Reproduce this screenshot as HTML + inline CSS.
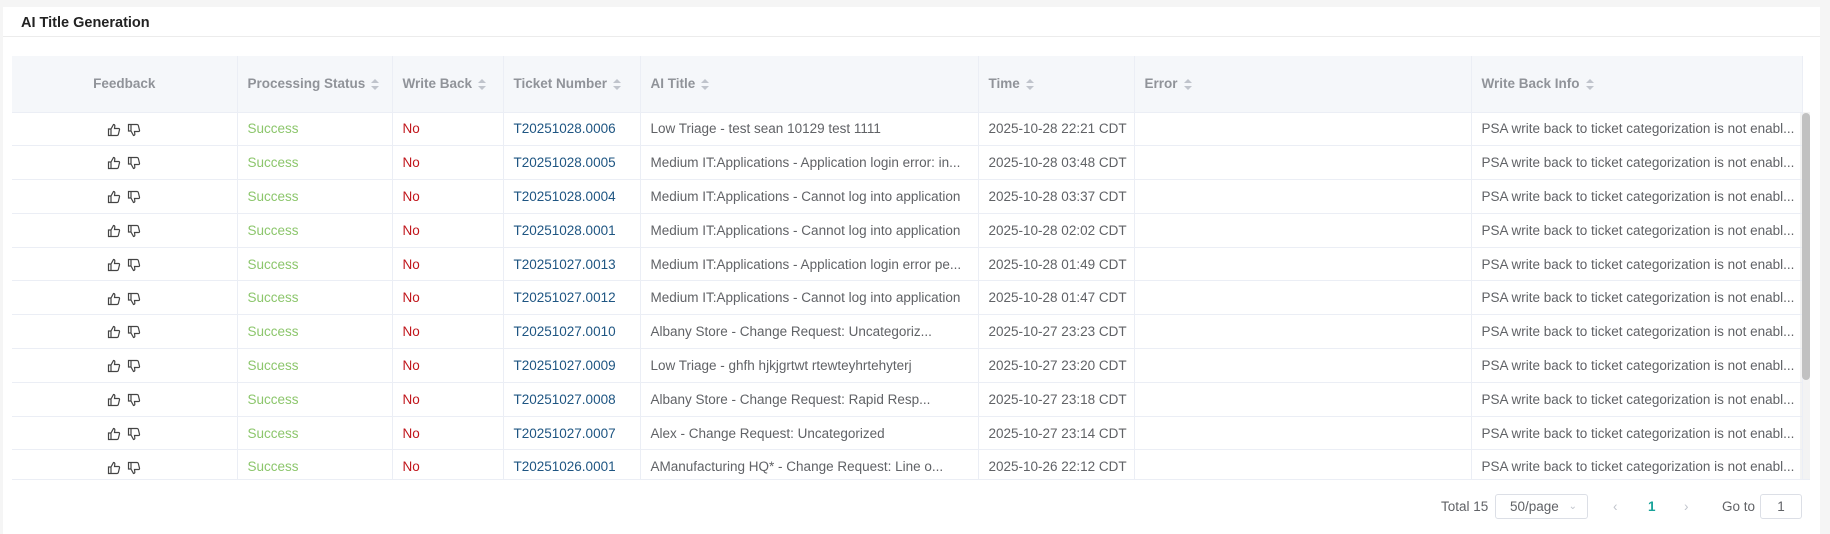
<!DOCTYPE html>
<html><head><meta charset="utf-8"><style>
*{box-sizing:border-box;margin:0;padding:0}
body{width:1830px;height:534px;background:#f5f5f5;font-family:"Liberation Sans",Arial,sans-serif;overflow:hidden;position:relative}
.card{position:absolute;left:3px;top:7px;width:1817px;height:527px;background:#fff}
.title{position:absolute;left:21px;top:15px;font-size:14.5px;font-weight:bold;color:#222}
.hl{position:absolute;left:3px;top:36px;width:1817px;height:1px;background:#ececec}
.tbl{position:absolute;left:12px;top:56px;width:1798px;height:424px;overflow:hidden;border-bottom:1px solid #ebeef5}
table{border-collapse:collapse;table-layout:fixed;width:1790px;font-size:13.5px}
th{height:56px;background:#f5f7fa;color:#909399;font-weight:bold;text-align:left;padding-left:10px;border-right:1px solid #ebeef5;border-bottom:1px solid #ebeef5;white-space:nowrap}
td{height:33.8px;padding-left:10px;border-right:1px solid #ebeef5;border-bottom:1px solid #ebeef5;white-space:nowrap;overflow:hidden;color:#606266}
th:first-child,td:first-child{text-align:center;padding-left:0}
.s{display:inline-block;vertical-align:middle;margin-left:6px;width:8px;height:12px;position:relative}
.s:before{content:"";position:absolute;left:0;top:0;border:4px solid transparent;border-bottom-color:#c0c4cc;border-top:0}
.s:after{content:"";position:absolute;left:0;top:7px;border:4px solid transparent;border-top-color:#c0c4cc;border-bottom:0}
.g{color:#8cc66c}.r{color:#c0151b}.b{color:#1e5582}
.sb{position:absolute;left:1802px;top:113px;width:8px;height:267px;background:#c1c1c1;border-radius:4px}
.sbt{position:absolute;left:1800px;top:112px;width:10px;height:368px;background:#f3f3f3}
.pg{position:absolute;top:494px;font-size:13.5px;color:#606266;line-height:25px}
.box{position:absolute;top:494px;height:25px;border:1px solid #dcdfe6;border-radius:3px;font-size:13.5px;color:#606266;line-height:23px}
</style></head><body>
<div class="card"></div>
<div class="title">AI Title Generation</div>
<div class="hl"></div>
<div class="sbt"></div>
<div class="tbl"><table>
<colgroup><col style="width:225px"><col style="width:155px"><col style="width:111px"><col style="width:137px"><col style="width:338px"><col style="width:156px"><col style="width:337px"><col style="width:331px"></colgroup>
<tr><th>Feedback</th><th>Processing Status<span class="s"></span></th><th>Write Back<span class="s"></span></th><th>Ticket Number<span class="s"></span></th><th>AI Title<span class="s"></span></th><th>Time<span class="s"></span></th><th>Error<span class="s"></span></th><th>Write Back Info<span class="s"></span></th></tr>
</table></div>
<div class="sb"></div>
<div class="pg" style="left:1441px">Total 15</div>
<div class="box" style="left:1495px;width:93px;padding-left:14px">50/page<span style="position:absolute;right:10px;top:0;color:#c0c4cc;font-size:10px">&#8964;</span></div>
<div class="pg" style="left:1613px;color:#c0c4cc">&#8249;</div>
<div class="pg" style="left:1648px;color:#1aa39a;font-weight:bold">1</div>
<div class="pg" style="left:1684px;color:#c0c4cc">&#8250;</div>
<div class="pg" style="left:1722px">Go to</div>
<div class="box" style="left:1760px;width:42px;text-align:center">1</div>
<script>
var d=[["T20251028.0006","Low Triage - test sean 10129 test 1111","2025-10-28 22:21 CDT"],
["T20251028.0005","Medium IT:Applications - Application login error: in...","2025-10-28 03:48 CDT"],
["T20251028.0004","Medium IT:Applications - Cannot log into application","2025-10-28 03:37 CDT"],
["T20251028.0001","Medium IT:Applications - Cannot log into application","2025-10-28 02:02 CDT"],
["T20251027.0013","Medium IT:Applications - Application login error pe...","2025-10-28 01:49 CDT"],
["T20251027.0012","Medium IT:Applications - Cannot log into application","2025-10-28 01:47 CDT"],
["T20251027.0010","Albany Store - Change Request: Uncategoriz...","2025-10-27 23:23 CDT"],
["T20251027.0009","Low Triage - ghfh hjkjgrtwt rtewteyhrtehyterj","2025-10-27 23:20 CDT"],
["T20251027.0008","Albany Store - Change Request: Rapid Resp...","2025-10-27 23:18 CDT"],
["T20251027.0007","Alex - Change Request: Uncategorized","2025-10-27 23:14 CDT"],
["T20251026.0001","AManufacturing HQ* - Change Request: Line o...","2025-10-26 22:12 CDT"],
["T20251026.0000","AManufacturing HQ* - Change Request","2025-10-26 22:10 CDT"]];
var up='<svg width="14" height="14" viewBox="0 0 14 14" style="vertical-align:middle"><path d="M1.5 6h2.5v6.5H1.5zM4 6l2.5-4.5c1 0 1.5.7 1.3 1.8L7.5 5.5h4c.8 0 1.2.6 1 1.3l-1.2 4.8c-.2.6-.6.9-1.2.9H4" fill="none" stroke="#444" stroke-width="1.2"/></svg>';
var dn='<svg width="14" height="14" viewBox="0 0 14 14" style="vertical-align:middle;margin-left:6px"><g transform="rotate(180 7 7) scale(-1 1) translate(-14 0)"><path d="M1.5 6h2.5v6.5H1.5zM4 6l2.5-4.5c1 0 1.5.7 1.3 1.8L7.5 5.5h4c.8 0 1.2.6 1 1.3l-1.2 4.8c-.2.6-.6.9-1.2.9H4" fill="none" stroke="#444" stroke-width="1.2"/></g></svg>';
var h='';d.forEach(function(r){h+='<tr><td>'+up+dn+'</td><td class="g">Success</td><td class="r">No</td><td class="b">'+r[0]+'</td><td>'+r[1]+'</td><td>'+r[2]+'</td><td></td><td>PSA write back to ticket categorization is not enabl...</td></tr>';});
document.querySelector('table').insertAdjacentHTML('beforeend',h);
</script>
</body></html>
